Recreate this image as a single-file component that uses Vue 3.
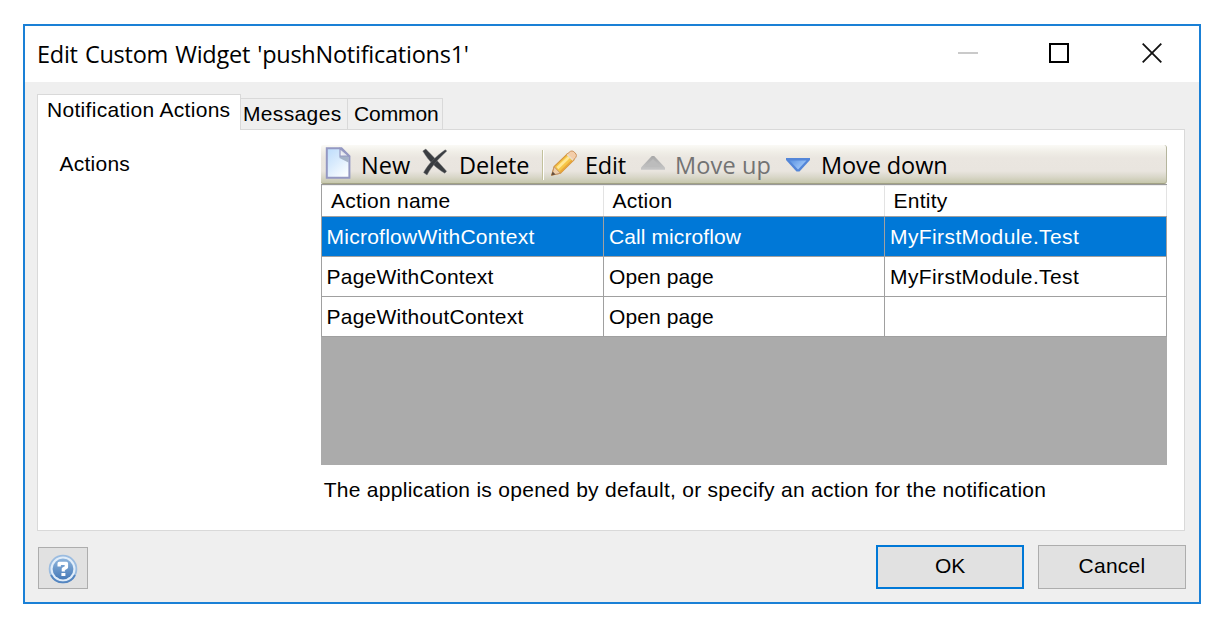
<script setup>
const tabs = [
  { label: 'Notification Actions', cls: 'active' },
  { label: 'Messages', cls: 'messages' },
  { label: 'Common', cls: 'common' },
]
const rows = [
  ['MicroflowWithContext', 'Call microflow', 'MyFirstModule.Test'],
  ['PageWithContext', 'Open page', 'MyFirstModule.Test'],
  ['PageWithoutContext', 'Open page', ''],
]
</script>

<template>
  <div class="window">
    <header class="titlebar">
      <span class="title">Edit Custom Widget 'pushNotifications1'</span>
      <div class="controls">
        <svg width="20" height="20" viewBox="0 0 20 20"><rect y="9" width="20" height="2" fill="#cacaca" /></svg>
        <svg width="20" height="20" viewBox="0 0 20 20"><rect x="1" y="1" width="18" height="18" fill="none" stroke="#000" stroke-width="2" /></svg>
        <svg width="20" height="20" viewBox="0 0 20 20"><path d="M.7.7 19.3 19.3M19.3.7.7 19.3" stroke="#111" stroke-width="1.8" /></svg>
      </div>
    </header>

    <div class="tabs">
      <div v-for="t in tabs" :key="t.label" class="tab" :class="t.cls"><span>{{ t.label }}</span></div>
    </div>

    <main class="page">
      <div class="label">Actions</div>
      <div class="field">
        <div class="toolbar">
          <svg class="i-new" width="26" height="32" viewBox="0 0 26 32">
            <defs>
              <linearGradient id="pg" x1="0" y1="0" x2=".7" y2="1"><stop offset="0" stop-color="#bcdcfb" /><stop offset=".5" stop-color="#d9ebfd" /><stop offset="1" stop-color="#fafdff" /></linearGradient>
              <linearGradient id="fd" x1="0" y1="1" x2="1" y2="0"><stop offset="0" stop-color="#fff" /><stop offset="1" stop-color="#b9bfd2" /></linearGradient>
            </defs>
            <path d="M1.8 1.2H16.5L24.4 9.2V30.8H1.8Z" fill="url(#pg)" stroke="#9498c2" stroke-width="2" />
            <path d="M14.5 9H23.4V15.5L14.5 11Z" fill="#7d8ba3" opacity=".6" />
            <path d="M15 1.5V9H23.9Z" fill="url(#fd)" stroke="#9498c2" stroke-width="1.2" />
          </svg>
          <span class="t-new">New</span>
          <svg class="i-del" width="26" height="28" viewBox="0 0 26 28">
            <g fill="#3a3d41" stroke="#6d6f71" stroke-opacity=".45" stroke-width="1">
              <path d="M.8 3 3.8 1C10 7.4 16 13.4 24.6 23.2L22.8 25.2C14 20 7 13.6.8 3Z" />
              <path d="M24.8 3 23.2 1.8C14 8.5 6.6 15.5 1.6 24.5L5 27C9.8 18.4 15.4 11.6 24.8 3Z" />
            </g>
          </svg>
          <span class="t-del">Delete</span>
          <i class="sep"></i>
          <svg class="i-edit" width="28" height="28" viewBox="0 0 28 28">
            <path d="M1.8 25 4.2 16.6 17.5 3.8 24 9.8 10.4 23.2Z" fill="#f6c647" stroke="#d5973f" stroke-width="1.2" />
            <path d="M6.5 17 19 5.2 21 7 8.4 19.2Z" fill="#ffe795" />
            <path d="M10 21 22.5 9 23.5 10 10.8 22.7Z" fill="#e9a63a" />
            <path d="M1.8 25.2 4.2 16.8 10.4 23.2Z" fill="#efcfaa" stroke="#bf9068" stroke-width=".9" />
            <path d="M1.2 25.4 2.6 21.6 5.6 24.4Z" fill="#67503f" />
            <path d="M16.8 4.4 20.3 1.4Q22 .4 23.8 1.6L26 4Q27 5.6 25.8 7.4L23.2 10.3Z" fill="#f3cda9" stroke="#cd935d" stroke-width="1" />
            <path d="M17.2 4.5 23 10.2" stroke="#ecdfc8" stroke-width="1.6" />
          </svg>
          <span class="t-edit">Edit</span>
          <svg class="i-up" width="26" height="16" viewBox="0 0 26 16">
            <defs><linearGradient id="ug" x1="0" y1="0" x2="0" y2="1"><stop offset="0" stop-color="#a8a8a8" /><stop offset="1" stop-color="#c6c6c6" /></linearGradient></defs>
            <path d="M11.8 1H14.2L25 12.4V14.8H1V12.4Z" fill="url(#ug)" />
            <path d="M13 4 21 12H5Z" fill="#bcbcbc" />
          </svg>
          <span class="t-up">Move up</span>
          <svg class="i-down" width="26" height="16" viewBox="0 0 26 16">
            <defs><linearGradient id="dg" x1="0" y1="0" x2="1" y2=".6"><stop offset="0" stop-color="#5b93e2" /><stop offset="1" stop-color="#a6ccfb" /></linearGradient></defs>
            <path d="M1 1H25V3L14.5 14.6H11.5L1 3Z" fill="#5486d8" />
            <path d="M4.5 3.4H21.5L13 12.4Z" fill="url(#dg)" />
          </svg>
          <span class="t-down">Move down</span>
        </div>
        <div class="table">
          <div class="row head">
            <div class="cell">Action name</div>
            <div class="cell">Action</div>
            <div class="cell">Entity</div>
          </div>
          <div v-for="(r, i) in rows" :key="i" class="row" :class="{ selected: i === 0 }">
            <div v-for="(c, j) in r" :key="j" class="cell" :class="'c' + (j + 1)">{{ c }}</div>
          </div>
        </div>
        <p class="note">The application is opened by default, or specify an action for the notification</p>
      </div>
    </main>

    <footer class="footer">
      <div class="help">
        <svg width="30" height="30" viewBox="0 0 30 30">
          <defs><linearGradient id="hg" x1="0" y1="0" x2="0" y2="1"><stop offset="0" stop-color="#8db4dc" /><stop offset="1" stop-color="#477ab8" /></linearGradient></defs>
          <circle cx="15" cy="15" r="13.4" fill="#e1edf9" stroke="#9bbce0" stroke-width="1.8" />
          <path d="M3 21A13.4 13.4 0 0 0 27 21" fill="none" stroke="#5586c0" stroke-width="1.8" />
          <circle cx="15" cy="15" r="10.4" fill="url(#hg)" />
          <path d="M11.2 12.4V9.4H18.4V13.2L15.4 15V17.4" fill="none" stroke="#fff" stroke-width="3.4" stroke-linejoin="round" />
          <rect x="13.4" y="19" width="4" height="3" fill="#fff" />
        </svg>
      </div>
      <div class="buttons">
        <div class="btn ok">OK</div>
        <div class="btn cancel">Cancel</div>
      </div>
    </footer>
  </div>
</template>

<style>
body { background: #fff; }
</style>

<style scoped>
.window {
  box-sizing: border-box;
  width: 1178px;
  height: 580px;
  margin: 24px 0 0 23px;
  border: 2px solid #1a80d6;
  background: #efefef;
  display: flex;
  flex-direction: column;
  font: 21px/24px "Liberation Sans", Arial, sans-serif;
  letter-spacing: 0.25px;
  color: #000;
  white-space: nowrap;
}
svg { display: block; flex: none; }
.titlebar {
  height: 56px;
  flex: none;
  background: #fff;
  display: flex;
  justify-content: space-between;
  box-sizing: border-box;
  padding: 0 37px 0 12px;
}
.title {
  font: 23.5px/32px "Open Sans", sans-serif;
  letter-spacing: -0.25px;
  word-spacing: 1.3px;
  margin-top: 12px;
}
.controls { display: flex; gap: 71px; margin-top: 17px; }
.controls svg:last-child { margin-left: 2px; }
.tabs { display: flex; align-items: flex-end; height: 35px; margin: 12px 0 0 12px; flex: none; }
.tab {
  box-sizing: border-box;
  border: 1px solid #d9d9d9;
  border-bottom: 0;
  border-left: 0;
  height: 31px;
  padding-top: 3px;
}
.active {
  position: relative;
  width: 204px;
  height: 36px;
  margin-bottom: -1px;
  padding: 3px 0 0 9px;
  border-left: 1px solid #d9d9d9;
  background: #fff;
  letter-spacing: 0.3px;
}
.messages { width: 107px; padding-left: 2px; letter-spacing: 0.35px; }
.common { width: 95px; padding-left: 6px; letter-spacing: -0.1px; }
.page {
  box-sizing: border-box;
  width: 1148px;
  height: 402px;
  flex: none;
  margin-left: 12px;
  border: 1px solid #d9d9d9;
  background: #fff;
  display: flex;
}
.label { box-sizing: border-box; width: 283px; padding: 22px 0 0 21.5px; flex: none; }
.field { width: 846px; padding-top: 15px; }
.toolbar {
  box-sizing: border-box;
  height: 39px;
  border-bottom: 1px solid #a2a285;
  border-right: 1px solid #b5b59d;
  border-radius: 2px 3px 3px 2px;
  background: linear-gradient(#fbfaf6 0, #f0eee7 7px, #eae6e0 13px, #e9e5df 26px, #d9d7c9 32px, #c6c7ac 38px);
  display: flex;
  font: 23.5px/32px "Open Sans", sans-serif;
  letter-spacing: 0;
}
.toolbar span { margin-top: 4px; flex: none; }
.i-new { margin: 2px 0 0 4px; }
.t-new { width: 51px; margin-left: 10px; }
.i-del { margin: 3px 0 0 10px; }
.t-del { width: 72px; margin-left: 11px; letter-spacing: -0.1px; }
.sep { width: 1px; height: 30px; margin: 5px 0 0 11px; background: #c3c19c; border-right: 1px solid #fff; flex: none; }
.i-edit { margin: 5px 0 0 6px; }
.t-edit { width: 43px; margin-left: 7px; letter-spacing: -0.2px; }
.i-up { margin: 10px 0 0 12px; }
.t-up { width: 98px; margin-left: 9px; color: #737373; letter-spacing: 0.15px; }
.i-down { margin: 12px 0 0 12px; }
.t-down { margin-left: 10px; letter-spacing: -0.1px; }
.table {
  box-sizing: border-box;
  height: 281px;
  border-top: 1px solid #989898;
  background: #ababab;
}
.row {
  display: grid;
  grid-template-columns: 282px 281px 282px;
  height: 40px;
  box-sizing: border-box;
  border-left: 1px solid #a0a0a0;
  border-bottom: 1px solid #a0a0a0;
  background: #fff;
}
.cell { border-right: 1px solid #a0a0a0; padding-left: 5px; line-height: 40px; }
.c1 { padding-left: 4.5px; }
.c2 { letter-spacing: 0.1px; }
.c3 { letter-spacing: 0.4px; }
.head { height: 32px; }
.head .cell { border-right-color: #e3e3e3; border-top: 1px solid #eee; padding-left: 9px; line-height: 30px; }
.head .cell + .cell { padding-left: 8.5px; }
.selected { background: #0078d7; color: #fff; }
.note { margin: 13px 0 0 2.7px; letter-spacing: 0.28px; }
.footer { display: flex; justify-content: space-between; align-items: flex-end; margin: 14px 13px 0; height: 44px; }
.help {
  box-sizing: border-box;
  width: 50px;
  height: 42px;
  border: 1px solid #adadad;
  background: #e1e1e1;
  display: flex;
  padding: 6px 0 0 9px;
}
.buttons { display: flex; gap: 14px; }
.btn {
  box-sizing: border-box;
  width: 148px;
  height: 44px;
  border: 1px solid #adadad;
  background: #e1e1e1;
  text-align: center;
  line-height: 40px;
}
.ok { border: 2px solid #0078d7; line-height: 38px; letter-spacing: -0.2px; }
.cancel { letter-spacing: 0.25px; }
</style>
